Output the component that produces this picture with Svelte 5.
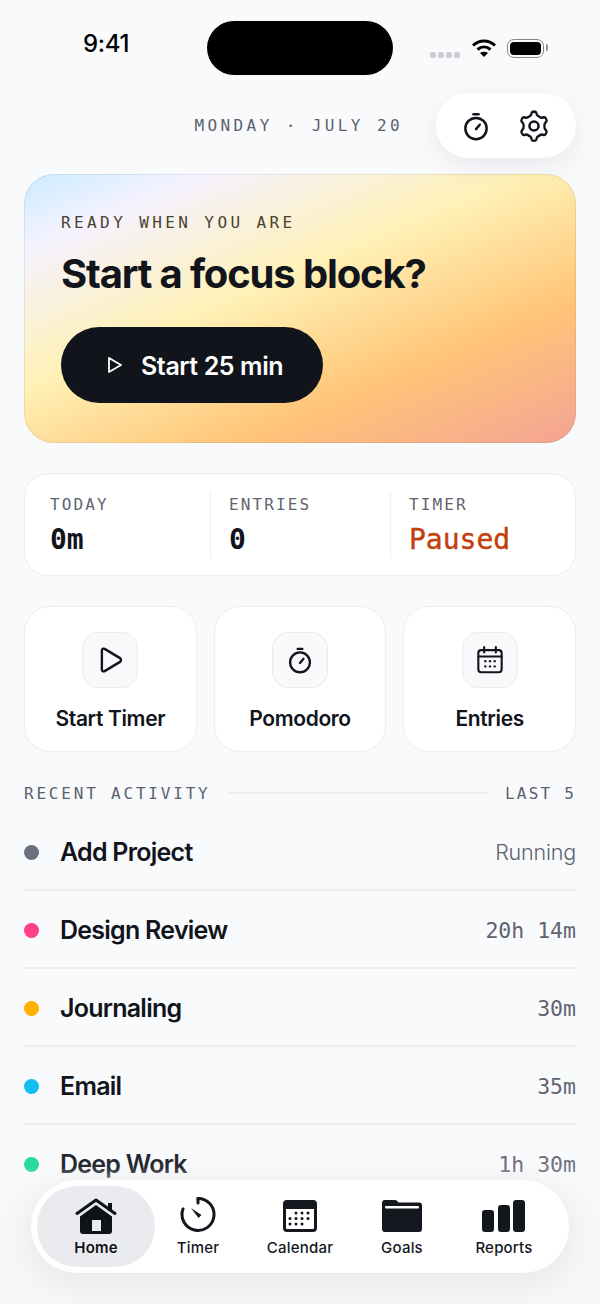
<script>
	const stats = [
		{ label: 'TODAY', value: '0m' },
		{ label: 'ENTRIES', value: '0' },
		{ label: 'TIMER', value: 'Paused', paused: true }
	];

	const activity = [
		{ name: 'Add Project', time: 'Running', color: '#6b7080', running: true },
		{ name: 'Design Review', time: '20h 14m', color: '#ff3f86' },
		{ name: 'Journaling', time: '30m', color: '#ffb000' },
		{ name: 'Email', time: '35m', color: '#12bff2' },
		{ name: 'Deep Work', time: '1h 30m', color: '#12d596' }
	];

	const gearPath =
		'M10.2 2.6c.4-1 3.2-1 3.6 0l.5 1.5c.2.5.8.9 1.4 1.1.4.2.7.3 1 .6.5.3 1.2.4 1.7.3l1.5-.3c1.1-.2 2.5 2.2 1.8 3l-1 1.2c-.4.4-.6 1-.5 1.6v1c-.1.6.1 1.2.5 1.6l1 1.2c.7.8-.7 3.2-1.8 3l-1.5-.3c-.5-.1-1.2 0-1.7.3-.3.3-.6.4-1 .6-.6.2-1.2.6-1.4 1.1l-.5 1.5c-.4 1-3.2 1-3.6 0l-.5-1.5c-.2-.5-.8-.9-1.4-1.1-.4-.2-.7-.3-1-.6-.5-.3-1.2-.4-1.7-.3l-1.5.3c-1.1.2-2.5-2.2-1.8-3l1-1.2c.4-.4.6-1 .5-1.6v-1c.1-.6-.1-1.2-.5-1.6l-1-1.2c-.7-.8.7-3.2 1.8-3l1.5.3c.5.1 1.2 0 1.7-.3.3-.3.6-.4 1-.6.6-.2 1.2-.6 1.4-1.1z';

	const calendarDots = [
		[13, 13], [19, 13], [25, 13],
		[7, 18.5], [13, 18.5], [19, 18.5], [25, 18.5],
		[7, 24], [13, 24], [19, 24]
	];
</script>

{#snippet stopwatch(size)}
	<svg width={size} height={size} viewBox="0 0 24 24" fill="none" stroke="currentColor" stroke-width="2" stroke-linecap="round">
		<circle cx="12" cy="14" r="8.5" />
		<line x1="10" y1="2.5" x2="14" y2="2.5" />
		<line x1="12" y1="14.5" x2="15" y2="11" />
	</svg>
{/snippet}

<div class="screen">
	<div class="status">
		<span class="clock">9:41</span>
		<div class="island"></div>
		<div class="status-icons">
			<div class="signal"><i></i><i></i><i></i><i></i></div>
			<svg class="wifi" width="26" height="20" viewBox="0 0 26 20" fill="none" stroke="#000" stroke-width="3">
				<path d="M2 7.5c6.5-6 15.5-6 22 0" />
				<path d="M6.5 11.5c4-3.5 9-3.5 13 0" />
				<path d="M13 19l-4-4c2.4-1.8 5.6-1.8 8 0z" fill="#000" stroke="none" />
			</svg>
			<div class="battery"><div class="battery-fill"></div></div>
		</div>
	</div>

	<main>
		<div class="top-row">
			<span class="date">MONDAY · JULY 20</span>
			<div class="tools">
				{@render stopwatch(30)}
				<svg width="34" height="34" viewBox="0 0 24 24" fill="none" stroke="currentColor" stroke-width="1.8" stroke-linejoin="round">
					<path d={gearPath} transform="translate(12 0) scale(0.9 1) translate(-12 0)" />
					<circle cx="12" cy="12" r="3.2" />
				</svg>
			</div>
		</div>

		<section class="hero">
			<p class="eyebrow">READY WHEN YOU ARE</p>
			<h1>Start a focus block?</h1>
			<button class="start">
				<svg width="16" height="18" viewBox="0 0 16 18" fill="none" stroke="#fff" stroke-width="1.8" stroke-linejoin="round">
					<path d="M2 2l12 7-12 7z" />
				</svg>
				Start 25 min
			</button>
		</section>

		<section class="stats">
			{#each stats as s}
				<div class="stat">
					<span class="stat-label">{s.label}</span>
					<span class="stat-value" class:paused={s.paused}>{s.value}</span>
				</div>
			{/each}
		</section>

		<section class="actions">
			<div class="action">
				<div class="action-icon">
					<svg width="30" height="30" viewBox="0 0 24 24" fill="none" stroke="currentColor" stroke-width="1.9" stroke-linejoin="round">
						<path d="M5.5 4.5c0-1.300 1.100-2 2.200-1.400l12.300 7.400c1.100.7 1.100 2.300 0 3L7.700 20.900c-1.100.6-2.200-.1-2.200-1.400z" />
					</svg>
				</div>
				<span>Start Timer</span>
			</div>
			<div class="action">
				<div class="action-icon">{@render stopwatch(28)}</div>
				<span>Pomodoro</span>
			</div>
			<div class="action">
				<div class="action-icon">
					<svg width="28" height="28" viewBox="0 0 24 24" fill="none" stroke="currentColor" stroke-width="1.8" stroke-linecap="round">
						<rect x="2" y="3.5" width="20" height="19" rx="2.5" />
						<line x1="2" y1="9" x2="22" y2="9" />
						<line x1="7" y1="1" x2="7" y2="5.5" />
						<line x1="17" y1="1" x2="17" y2="5.5" />
						<g fill="currentColor" stroke="none">
							<circle cx="8" cy="13" r="1" /><circle cx="12" cy="13" r="1" /><circle cx="16" cy="13" r="1" />
							<circle cx="8" cy="17.5" r="1" /><circle cx="12" cy="17.5" r="1" /><circle cx="16" cy="17.5" r="1" />
						</g>
					</svg>
				</div>
				<span>Entries</span>
			</div>
		</section>

		<div class="section-head">
			<span>RECENT ACTIVITY</span>
			<div class="rule"></div>
			<span class="last">LAST 5</span>
		</div>

		<ul class="list">
			{#each activity as a}
				<li>
					<span class="dot" style="background: {a.color}"></span>
					<span class="name">{a.name}</span>
					<span class="time" class:running={a.running}>{a.time}</span>
				</li>
			{/each}
		</ul>
	</main>

	<div class="fade"></div>

	<nav>
		<div class="tab active">
			<svg width="42" height="38" viewBox="0 0 42 38">
				<path d="M2 15.5L21 2l19 13.5" fill="none" stroke="#0f1218" stroke-width="3" stroke-linecap="round" stroke-linejoin="round" />
				<rect x="33" y="5" width="4" height="8" fill="#0f1218" />
				<path fill-rule="evenodd" d="M21 7l16 11.5V33a3 3 0 0 1-3 3H8a3 3 0 0 1-3-3V18.5zM17 22v11h9V22z" fill="#0f1218" />
			</svg>
			<span>Home</span>
		</div>
		<div class="tab timer">
			<svg width="36" height="36" viewBox="0 0 36 36" fill="none" stroke="#14171e" stroke-width="3" stroke-linecap="round">
				<path d="M18 1.5a16 16 0 1 1-15 10.5" />
				<path d="M11 11l10.5 7-3 3z" fill="#14171e" stroke="none" />
				<line x1="18" y1="1.5" x2="18" y2="6" />
			</svg>
			<span>Timer</span>
		</div>
		<div class="tab">
			<svg width="34" height="32" viewBox="0 0 34 32">
				<path fill-rule="evenodd" d="M4 0h26a4 4 0 0 1 4 4v24a4 4 0 0 1-4 4H4a4 4 0 0 1-4-4V4a4 4 0 0 1 4-4zM3 9v19a1 1 0 0 0 1 1h26a1 1 0 0 0 1-1V9z" fill="#14171e" />
				<g fill="#14171e">
					{#each calendarDots as [cx, cy]}
						<circle {cx} {cy} r="1.5" />
					{/each}
				</g>
			</svg>
			<span>Calendar</span>
		</div>
		<div class="tab">
			<svg width="40" height="32" viewBox="0 0 40 32">
				<path d="M3 0h10c1.5 0 2.500 1 3.500 2.500h20.500a3 3 0 0 1 3 3V29a3 3 0 0 1-3 3H3a3 3 0 0 1-3-3V3a3 3 0 0 1 3-3z" fill="#14171e" />
				<rect x="3" y="6" width="34" height="2.6" rx="1" fill="#fff" />
			</svg>
			<span>Goals</span>
		</div>
		<div class="tab">
			<svg width="44" height="32" viewBox="0 0 44 32" fill="#14171e">
				<rect x="0" y="10" width="12" height="22" rx="3" />
				<rect x="16" y="5" width="12" height="27" rx="3" />
				<rect x="31" y="0" width="12" height="32" rx="3" />
			</svg>
			<span>Reports</span>
		</div>
	</nav>
</div>

<style>
	:global(body) {
		background: #f9fafc;
	}

	.screen {
		position: relative;
		height: 1304px;
		overflow: hidden;
		background: #f9fafc;
		color: #11141b;
		font-family: Inter, 'Noto Sans', sans-serif;
	}

	.status {
		display: grid;
		grid-template-columns: 207px 186px 207px;
		height: 93px;
		padding-top: 21px;
		box-sizing: border-box;
	}

	.clock {
		padding: 9px 0 0 83px;
		font-size: 24px;
		line-height: 28px;
		font-weight: 500;
		letter-spacing: -0.3px;
		color: #000;
	}

	.island {
		height: 54px;
		border-radius: 27px;
		background: #000;
	}

	.status-icons {
		display: flex;
		align-items: flex-start;
		padding: 18px 0 0 37px;
	}

	.signal {
		display: flex;
		gap: 2px;
		margin: 13px 11px 0 0;
	}

	.signal i {
		width: 6px;
		height: 6px;
		border-radius: 2px;
		background: #c9cbd0;
	}

	.wifi {
		margin-top: -1px;
	}

	.battery {
		position: relative;
		width: 37px;
		height: 19px;
		margin-left: 10px;
		padding: 2px;
		box-sizing: border-box;
		border: 1.5px solid #85878c;
		border-radius: 7px;
	}

	.battery::after {
		content: '';
		position: absolute;
		right: -5px;
		top: 4px;
		width: 2px;
		height: 7px;
		border-radius: 0 2px 2px 0;
		background: #8d8f94;
	}

	.battery-fill {
		height: 100%;
		border-radius: 4px;
		background: #000;
	}

	main {
		padding: 0 24px;
	}

	.top-row {
		display: flex;
		justify-content: flex-end;
		align-items: center;
		gap: 33px;
		height: 65px;
	}

	.date,
	.eyebrow,
	.section-head span,
	.stat-label,
	.stat-value,
	.time {
		font-family: 'DejaVu Sans Mono', 'Liberation Mono', monospace;
	}

	.date {
		font-size: 16px;
		letter-spacing: 3.4px;
		color: #5c606e;
	}

	.tools {
		display: flex;
		align-items: center;
		gap: 26px;
		width: 140px;
		height: 65px;
		padding-left: 25px;
		box-sizing: border-box;
		border-radius: 33px;
		background: #fff;
		box-shadow: 0 8px 28px rgba(17, 20, 27, 0.07);
	}

	.hero {
		height: 269px;
		margin-top: 16px;
		padding: 38px 36px 0;
		box-sizing: border-box;
		border: 1px solid rgba(17, 20, 27, 0.07);
		border-radius: 30px;
		background: linear-gradient(157deg, #c9ecff 0%, #f5f2ff 15%, #fff1b5 43%, #ffc578 71%, #f4a394 100%) border-box;
	}

	.eyebrow {
		margin: 0;
		font-size: 16px;
		line-height: 20px;
		letter-spacing: 3.4px;
		color: #4a4230;
	}

	h1 {
		margin: 16px 0 0;
		font-size: 40px;
		line-height: 50px;
		font-weight: 700;
		letter-spacing: -1.15px;
	}

	.start {
		display: flex;
		align-items: center;
		gap: 18px;
		width: 262px;
		height: 76px;
		margin-top: 28px;
		padding: 2px 0 0 46px;
		border: none;
		border-radius: 38px;
		background: #11141b;
		color: #fff;
		font: 600 25px Inter, sans-serif;
		letter-spacing: -0.4px;
	}

	.start svg {
		margin-top: -2px;
	}

	.stats {
		display: grid;
		grid-template-columns: 185px 180px 1fr;
		height: 103px;
		margin-top: 30px;
		padding: 18px 0;
		box-sizing: border-box;
		border: 1px solid #eceef1;
		border-radius: 24px;
		background: #fff;
	}

	.stat {
		display: flex;
		flex-direction: column;
		gap: 7px;
		padding: 3px 0 0 18px;
		border-left: 1px solid #eceef1;
	}

	.stat:first-child {
		padding-left: 25px;
		border-left: none;
	}

	.stat-label {
		font-size: 16px;
		line-height: 20px;
		letter-spacing: 2.1px;
		color: #5f6370;
	}

	.stat-value {
		font-size: 28px;
		line-height: 36px;
		font-weight: 700;
	}

	.stat-value.paused {
		font-weight: 400;
		color: #c2400d;
		-webkit-text-stroke: 0.4px #c2400d;
	}

	.actions {
		display: grid;
		grid-template-columns: repeat(3, 1fr);
		gap: 17px;
		margin-top: 30px;
	}

	.action {
		display: flex;
		flex-direction: column;
		align-items: center;
		height: 146px;
		padding-top: 25px;
		box-sizing: border-box;
		border: 1px solid #eceef1;
		border-radius: 26px;
		background: #fff;
		font-size: 21px;
		font-weight: 600;
		letter-spacing: -0.35px;
	}

	.action-icon {
		display: flex;
		align-items: center;
		justify-content: center;
		width: 56px;
		height: 56px;
		margin-bottom: 18px;
		box-sizing: border-box;
		border: 1px solid #e9ebef;
		border-radius: 16px;
		background: #f8f9fb;
	}

	.section-head {
		display: flex;
		align-items: center;
		gap: 16px;
		margin-top: 31px;
		height: 20px;
	}

	.section-head span {
		font-size: 16px;
		letter-spacing: 2.8px;
		color: #5c606e;
		white-space: nowrap;
	}

	.section-head .last {
		letter-spacing: 2.2px;
	}

	.rule {
		flex: 1;
		height: 2px;
		background: #eceef1;
	}

	.list {
		list-style: none;
		margin: 10px 0 0;
		padding: 0;
	}

	.list li {
		display: flex;
		align-items: center;
		height: 78px;
		padding-top: 2px;
		box-sizing: border-box;
		border-bottom: 2px solid #eceef1;
	}

	.dot {
		width: 15px;
		height: 15px;
		margin-right: 21px;
		border-radius: 50%;
	}

	.name {
		flex: 1;
		font-size: 25px;
		font-weight: 600;
		letter-spacing: -0.75px;
	}

	.time {
		font-size: 21.5px;
		color: #5f6370;
	}

	.time.running {
		font-family: Inter, sans-serif;
		font-weight: 300;
		font-size: 21.5px;
		letter-spacing: -0.2px;
	}

	.fade {
		position: absolute;
		left: 0;
		right: 0;
		bottom: 0;
		height: 190px;
		background: linear-gradient(to bottom, rgba(247, 248, 250, 0) 0%, rgba(247, 248, 250, 0.1) 28%, rgba(247, 248, 250, 0.95) 45%, #f6f7f9 100%);
	}

	nav {
		position: absolute;
		left: 31px;
		right: 31px;
		top: 1180px;
		height: 93px;
		display: grid;
		grid-template-columns: repeat(5, 1fr);
		padding: 6px 14px;
		box-sizing: border-box;
		border-radius: 47px;
		background: #fff;
		box-shadow: 0 8px 36px rgba(17, 20, 27, 0.08);
	}

	.tab {
		display: flex;
		flex-direction: column;
		align-items: center;
		justify-content: flex-end;
		gap: 7px;
		padding-bottom: 10px;
		font-size: 15px;
		line-height: 18px;
		font-weight: 500;
		letter-spacing: 0.2px;
		color: #14171e;
	}

	.tab.timer {
		gap: 6px;
	}

	.tab.active {
		gap: 3px;
		margin: 0 -8px;
		border-radius: 40px;
		background: #e9ebee;
		color: #0f1218;
		font-weight: 600;
	}
</style>
